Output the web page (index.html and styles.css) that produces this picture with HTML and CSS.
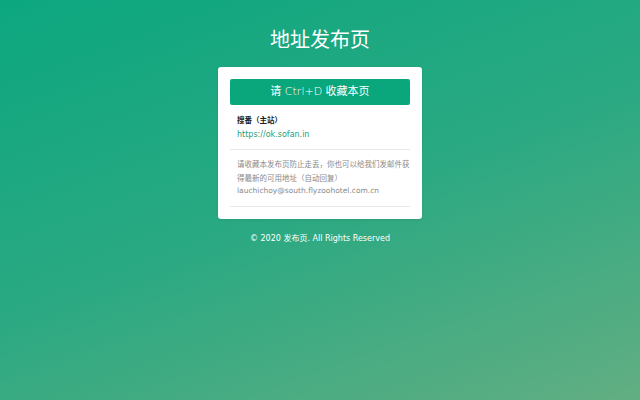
FILE: index.html
```html
<!DOCTYPE html>
<html lang="zh-CN">
<head>
<meta charset="utf-8">
<title>地址发布页</title>
<link rel="stylesheet" href="styles.css">
</head>
<body>
<div class="page">
  <h1 class="title">地址发布页</h1>
  <div class="card">
    <div class="btn">请 <span class="key">Ctrl+D</span> 收藏本页</div>
    <div class="site">
      <div class="site-name cjk">搜番（主站）</div>
      <a class="site-link" href="#">https://ok.sofan.in</a>
    </div>
    <div class="note">
      <p class="cjk">请收藏本发布页防止走丢，你也可以给我们发邮件获得最新的可用地址（自动回复）</p>
      <p>lauchichoy@south.flyzoohotel.com.cn</p>
    </div>
  </div>
  <div class="footer">© 2020 发布页. All Rights Reserved</div>
</div>
</body>
</html>
```
FILE: styles.css
```css
html, body {
  margin: 0;
  padding: 0;
  height: 100%;
}
body {
  font-family: "DejaVu Sans", "Noto Sans CJK SC", sans-serif;
  background: linear-gradient(160deg, #0ca77f 0%, #2aa982 50%, #62ae82 100%);
  color: #fff;
}
.cjk {
  font-family: "Noto Sans CJK SC", sans-serif;
  text-spacing-trim: space-all;
}
.page {
  display: flex;
  flex-direction: column;
  align-items: center;
  padding-top: 25px;
}
.title {
  margin: 0;
  font-size: 20px;
  font-weight: normal;
  font-family: "Noto Sans CJK SC", sans-serif;
  line-height: 28px;
  height: 28px;
}
.card {
  margin-top: 14px;
  width: 180px;
  background: #fff;
  border-radius: 3px;
  padding: 12px 12px 12px;
  box-shadow: 0 1px 3px rgba(0,0,0,0.08);
}
.btn {
  height: 26px;
  line-height: 26px;
  background: #0aa67c;
  border-radius: 2px;
  text-align: center;
  font-size: 11px;
  color: #fff;
}
.key {
  font-weight: 300;
}
.site {
  padding: 8px 7px 8px;
  border-bottom: 1px solid #e8e8e8;
}
.site-name {
  font-size: 7.5px;
  font-weight: bold;
  color: #222;
  line-height: 13px;
}
.site-link {
  display: block;
  margin-top: 2px;
  font-size: 8px;
  color: #1aa07e;
  text-decoration: none;
  line-height: 13px;
}
.note {
  padding: 7px 0 8px 7px;
  border-bottom: 1px solid #e8e8e8;
  color: #8a8a8a;
  font-size: 7.5px;
  line-height: 13.5px;
}
.note p {
  margin: 0;
}
.footer {
  margin-top: 14px;
  font-size: 8px;
  line-height: 12px;
}
```
